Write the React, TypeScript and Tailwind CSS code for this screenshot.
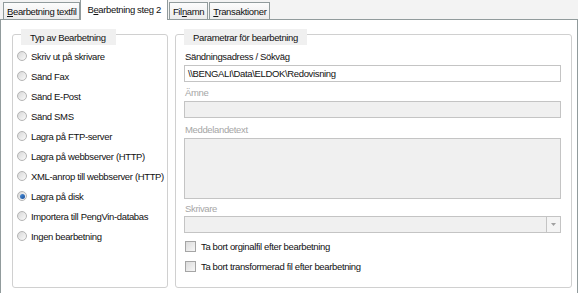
import React from "react";

const font = { fontFamily: '"Liberation Sans", Arial, sans-serif' };

function Tab({ children, active }: { children: React.ReactNode; active?: boolean }) {
  if (active) {
    return (
      <div className="relative z-10 -mb-px flex h-[21px] items-start border border-b-0 border-[#919b9c] bg-white px-[6px] pt-[3px]">
        <span>{children}</span>
      </div>
    );
  }
  return (
    <div className="flex h-[17px] items-start border border-b-0 border-[#919b9c] bg-gradient-to-b from-[#fcfcfc] to-[#ececec] px-[3px] pt-[2px]">
      <span>{children}</span>
    </div>
  );
}

function Radio({ label, checked }: { label: string; checked?: boolean }) {
  return (
    <div className="flex h-[20px] items-center whitespace-nowrap">
      <span className="flex h-[10px] w-[10px] shrink-0 items-center justify-center rounded-full border border-[#b4b4b4] bg-gradient-to-br from-[#d8d8d8] to-[#fafafa]">
        {checked && <span className="h-[5px] w-[5px] rounded-full bg-gradient-to-br from-[#4a8fd8] to-[#1c4f9a]" />}
      </span>
      <span className="ml-[4px] text-[#111]">{label}</span>
    </div>
  );
}

function Check({ label }: { label: string }) {
  return (
    <div className="flex h-[13px] items-center whitespace-nowrap">
      <span className="ml-[1px] h-[11px] w-[11px] shrink-0 border border-[#a5a5a5] bg-gradient-to-br from-[#dcdcdc] to-[#f7f7f7]" />
      <span className="ml-[5px] text-[#111]">{label}</span>
    </div>
  );
}

function Legend({ children, className }: { children: React.ReactNode; className: string }) {
  return (
    <div className={"absolute top-[-6px] flex h-[16px] items-center whitespace-nowrap bg-[#f0f0f0] pl-[9px] " + className}>
      {children}
    </div>
  );
}

export default function App() {
  return (
    <div
      className="flex h-[293px] w-[578px] flex-col overflow-hidden bg-white text-[9.5px] leading-[13px] tracking-[-0.35px] text-[#111]"
      style={font}
    >
      <div className="flex h-[20px] shrink-0 items-end border-b border-[#919b9c] bg-[#f3f3f3] pl-[3px]">
        <Tab>
          <span className="underline">B</span>earbetning textfil
        </Tab>
        <Tab active>
          B<span className="underline">e</span>arbetning steg 2
        </Tab>
        <div className="ml-[1px]">
          <Tab>
            Fil<span className="underline">n</span>amn
          </Tab>
        </div>
        <div className="ml-[1px]">
          <Tab>
            <span className="underline">T</span>ransaktioner
          </Tab>
        </div>
      </div>
      <div className="flex flex-1 gap-[7px] border-x border-[#919b9c] pl-[11px] pr-[5px] pt-[14px]">
        <div className="relative h-[254px] w-[156px] shrink-0 rounded-[3px] border border-[#d0d0d0]">
          <Legend className="left-[8px] w-[95px]">Typ av Bearbetning</Legend>
          <div className="flex flex-col px-[4px] pt-[11px]">
            <Radio label="Skriv ut på skrivare" />
            <Radio label="Sänd Fax" />
            <Radio label="Sänd E-Post" />
            <Radio label="Sänd SMS" />
            <Radio label="Lagra på FTP-server" />
            <Radio label="Lagra på webbserver (HTTP)" />
            <Radio label="XML-anrop till webbserver (HTTP)" />
            <Radio label="Lagra på disk" checked />
            <Radio label="Importera till PengVin-databas" />
            <Radio label="Ingen bearbetning" />
          </div>
        </div>
        <div className="relative h-[254px] w-[397px] shrink-0 rounded-[3px] border border-[#d0d0d0]">
          <Legend className="left-[8px] w-[123px]">Parametrar för bearbetning</Legend>
          <div className="flex flex-col pl-[8px] pr-[10px] pt-[15px]">
            <div className="pl-[1px]">Sändningsadress / Sökväg</div>
            <div className="mt-[2px] flex h-[17px] items-center border border-[#c4c4c4] bg-white pl-[3px]">
              \\BENGALI\Data\ELDOK\Redovisning
            </div>
            <div className="mt-[4px] pl-[1px] text-[#a6a6a6]">Ämne</div>
            <div className="mt-[2px] h-[17px] border border-[#c4c4c4] bg-[#f0f0f0]" />
            <div className="mt-[5px] pl-[1px] text-[#a6a6a6]">Meddelandetext</div>
            <div className="mt-[2px] h-[61px] border border-[#c4c4c4] bg-[#f0f0f0]" />
            <div className="mt-[3px] pl-[1px] text-[#a6a6a6]">Skrivare</div>
            <div className="mt-px flex h-[17px] justify-end border border-[#c4c4c4] bg-[#f0f0f0]">
              <div className="flex w-[14px] items-center justify-center border-l border-[#c4c4c4] bg-[#f4f4f4]">
                <svg width="5" height="3" viewBox="0 0 5 3">
                  <path d="M0 0h5L2.5 3z" fill="#a0a0a0" />
                </svg>
              </div>
            </div>
            <div className="mt-[7px]">
              <Check label="Ta bort orginalfil efter bearbetning" />
            </div>
            <div className="mt-[7px]">
              <Check label="Ta bort transformerad fil efter bearbetning" />
            </div>
          </div>
        </div>
      </div>
    </div>
  );
}
